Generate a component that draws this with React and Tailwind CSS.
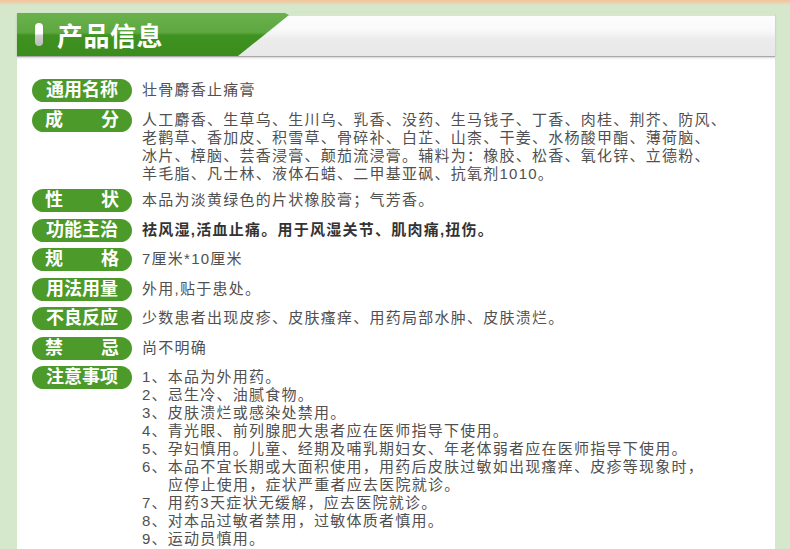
import React from "react";

const FONT = { fontFamily: '"Liberation Sans", "Noto Sans CJK SC", sans-serif' };

function Pill({ children, spread }) {
  return (
    <div
      className={
        "h-[23px] w-[100px] shrink-0 rounded-full bg-[#4c9a2a] text-white font-bold text-[18px] leading-[23px] flex items-center px-[13px] " +
        (spread ? "justify-between" : "justify-center")
      }
    >
      {children}
    </div>
  );
}

function Row({ label, spread, children }) {
  const parts = spread ? label.split("") : null;
  return (
    <div className="flex items-start gap-[10px]">
      <Pill spread={spread}>
        {spread ? (
          <>
            <span>{parts[0]}</span>
            <span>{parts[1]}</span>
          </>
        ) : (
          label
        )}
      </Pill>
      <div className="pt-[2px] text-[15px] tracking-[1.25px] leading-[18px] text-[#505050] whitespace-nowrap">
        {children}
      </div>
    </div>
  );
}

export default function App() {
  const notes = [
    "1、本品为外用药。",
    "2、忌生冷、油腻食物。",
    "3、皮肤溃烂或感染处禁用。",
    "4、青光眼、前列腺肥大患者应在医师指导下使用。",
    "5、孕妇慎用。儿童、经期及哺乳期妇女、年老体弱者应在医师指导下使用。",
  ];
  const notes2 = [
    "7、用药3天症状无缓解，应去医院就诊。",
    "8、对本品过敏者禁用，过敏体质者慎用。",
    "9、运动员慎用。",
  ];
  return (
    <div className="w-[790px] h-[549px] overflow-hidden bg-[#d5e8cc] flex flex-col" style={FONT}>
      <div className="h-[5px] shrink-0 bg-[linear-gradient(to_bottom,#f0c49a,#ead3b2_60%,#d5e8cc)]" />
      <div className="ml-[17px] w-[758px] mt-[8px] flex flex-col flex-1">
        {/* header */}
        <div className="h-[44px] shrink-0 flex bg-[linear-gradient(to_bottom,transparent_3px,#fdfdfd_3px,#f9f9f9_40%,#ececec_60%,#e8e8e8_100%)] border-b border-[#a9a9a9] shadow-[0_1px_2px_rgba(0,0,0,0.18)] relative z-10">
          <div className="w-[272px] h-full flex items-center bg-[linear-gradient(to_bottom,#6ab14c_0%,#5ea840_45%,#3f9220_52%,#3a8c1c_100%)] [clip-path:polygon(0_0,268px_0,272px_2px,221px_100%,0_100%)]">
            <div className="ml-[18px] w-[8px] h-[23px] rounded-full bg-[linear-gradient(to_bottom,#ffffff_0%,#ffffff_45%,#cfcfcf_55%,#bdbdbd_100%)]" />
            <div className="ml-[14px] text-white font-bold text-[26px] leading-none tracking-[0.5px]" style={{ fontFamily: '"Noto Sans CJK SC", sans-serif' }}>
              产品信息
            </div>
          </div>
        </div>
        {/* panel */}
        <div className="flex-1 bg-white pl-[15px] pt-[22px] flex flex-col gap-[6.5px]">
          <Row label="通用名称">壮骨麝香止痛膏</Row>
          <Row label="成分" spread>
            <div>人工麝香、生草乌、生川乌、乳香、没药、生马钱子、丁香、肉桂、荆芥、防风、</div>
            <div>老鹳草、香加皮、积雪草、骨碎补、白芷、山柰、干姜、水杨酸甲酯、薄荷脑、</div>
            <div>冰片、樟脑、芸香浸膏、颠茄流浸膏。辅料为：橡胶、松香、氧化锌、立德粉、</div>
            <div>羊毛脂、凡士林、液体石蜡、二甲基亚砜、抗氧剂1010。</div>
          </Row>
          <Row label="性状" spread>本品为淡黄绿色的片状橡胶膏；气芳香。</Row>
          <Row label="功能主治">
            <span className="font-bold text-[#333333]">祛风湿,活血止痛。用于风湿关节、肌肉痛,扭伤。</span>
          </Row>
          <Row label="规格" spread>7厘米*10厘米</Row>
          <Row label="用法用量">外用,贴于患处。</Row>
          <Row label="不良反应">少数患者出现皮疹、皮肤瘙痒、用药局部水肿、皮肤溃烂。</Row>
          <Row label="禁忌" spread>尚不明确</Row>
          <Row label="注意事项">
            {notes.map((n) => (
              <div key={n}>{n}</div>
            ))}
            <div>6、本品不宜长期或大面积使用，用药后皮肤过敏如出现瘙痒、皮疹等现象时，</div>
            <div className="pl-[26px]">应停止使用，症状严重者应去医院就诊。</div>
            {notes2.map((n) => (
              <div key={n}>{n}</div>
            ))}
          </Row>
        </div>
      </div>
    </div>
  );
}
